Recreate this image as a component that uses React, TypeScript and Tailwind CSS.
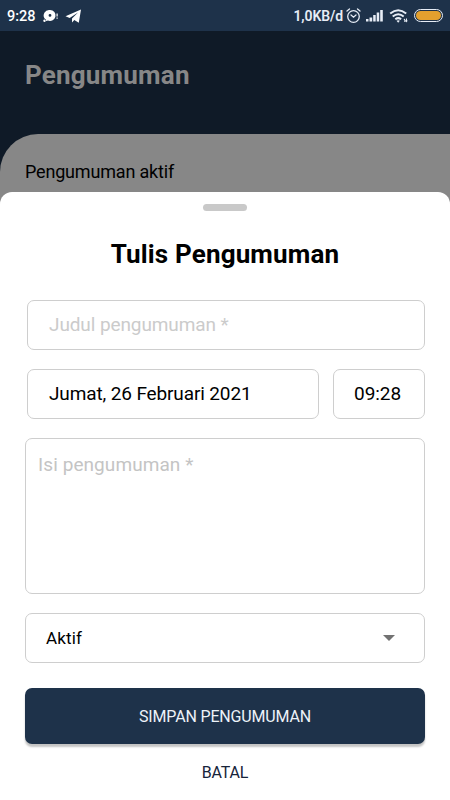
import React from "react";

function StatusBar() {
  return (
    <header className="flex h-[31px] items-center bg-[#1e324a] text-white">
      <span className="ml-[7px] mt-[3px] w-[35px] text-[14.500px] font-medium leading-4 whitespace-nowrap">9:28</span>
      <svg className="mt-[3px]" width="18" height="16" viewBox="0 0 18 16" fill="#fff">
        <path fillRule="evenodd" d="M8 1a5.500 5.500 0 1 1-2.600 10.300L3 10A5.500 5.500 0 0 1 8 1Zm0 4a1.400 1.400 0 1 0 0 2.800A1.400 1.400 0 0 0 8 5Z" />
        <path d="M4 9.500 6 11.500 4 12Z" />
        <circle cx="2.500" cy="11.700" r="1.200" />
        <path d="M14.500 4.500h1.200v3h-1.200zM14.500 8.500h1.200v1.200h-1.200z" />
      </svg>
      <svg className="ml-[5px]" width="17" height="16" viewBox="0 0 17 16" fill="#fff">
        <path d="M16 1.500.5 8.200l4.200 1.700L13 4.500 7 10.500V14.500l2.300-2.400 4.500 2.600Z" />
      </svg>
      <span className="ml-auto mt-px text-[14px] font-semibold leading-4 tracking-[-0.1px] whitespace-nowrap text-[#e7edf6]">1,0KB/d</span>
      <svg className="ml-[3px]" width="15" height="16" viewBox="0 0 15 16" fill="none" stroke="#e7edf6" strokeWidth="1.300" strokeLinecap="round">
        <circle cx="7.500" cy="8.500" r="5.800" />
        <path d="m1 3 2.500-2M14 3l-2.500-2M5 7l2.500 2.200L10 7" />
      </svg>
      <svg className="ml-[4px]" width="19" height="15" viewBox="0 0 19 15" fill="#e7edf6">
        <path d="M1 11h2.500v2.500H1zM4.500 9.500h2.700v4H4.500zM8.200 7h2.500v6.500H8.200zM11.700 4.500h2.500v9h-2.500zM15.200 2h2.600v11.500h-2.600z" />
      </svg>
      <svg className="ml-[5px]" width="20" height="16" viewBox="0 0 20 16">
        <path d="M1.200 5.500q8-6.500 16 0M3.700 8.500q5.500-4.500 11 0M6.300 11.300q2.900-2.300 5.800 0" fill="none" stroke="#e7edf6" strokeWidth="2" />
        <path d="m7.500 12.700 1.700 2 1.700-2q-1.700-1-3.400 0ZM14.500 12l1-1.500 1 1.500v2h-1.200v-2zM17 10.500h1v2h.8l-1.300 2-1.200-2h.7z" fill="#e7edf6" />
      </svg>
      <span className="ml-[5px] mr-[7px] flex h-[13px] w-[29px] rounded-full border-[1.500px] border-[#e7edf6] p-[1px]">
        <span className="flex-1 rounded-full bg-[#e3a02e]" />
      </span>
    </header>
  );
}

function Field({ className, children }: { className: string; children: React.ReactNode }) {
  return <div className={`rounded-[7px] border border-[#cecece] ${className}`}>{children}</div>;
}

export default function App() {
  return (
    <div className="relative h-[800px] w-[450px] overflow-hidden bg-[#0f1a27] font-['Roboto','Liberation_Sans',sans-serif] text-black">
      <StatusBar />
      <h1 className="h-[103px] pl-[25px] pt-[28px] text-[26px] font-bold leading-8 tracking-[0.2px] text-[#878787]">Pengumuman</h1>
      <section className="h-[666px] rounded-tl-[38px] bg-[#878787] pl-[25px] pt-[27px] text-[18px] leading-[22px] tracking-[-0.18px]">
        Pengumuman aktif
      </section>
      <section className="absolute inset-x-0 bottom-0 flex h-[608px] flex-col rounded-t-[12px] bg-white px-[25px] pt-[12px]">
        <div className="h-[7px] w-[44px] shrink-0 self-center rounded-full bg-[#c9c9c9]" />
        <h2 className="mt-[27px] text-center text-[26px] font-bold leading-[32px] tracking-[0.15px]">Tulis Pengumuman</h2>
        <Field className="ml-[2px] mt-[30px] flex h-[50px] shrink-0 items-center pl-[21px] text-[19px] tracking-[-0.1px] text-[#cbcbcb]">Judul pengumuman *</Field>
        <div className="ml-[2px] mt-[19px] flex shrink-0 gap-[14px] text-[19px]">
          <Field className="flex h-[50px] flex-1 items-center pl-[21px] tracking-[-0.13px]">Jumat, 26 Februari 2021</Field>
          <Field className="flex h-[50px] w-[92px] items-center pl-[20px] tracking-[-0.05px]">09:28</Field>
        </div>
        <Field className="mt-[19px] h-[156px] shrink-0 pl-[12px] pt-[15px] text-[19px] leading-[22px] tracking-[0.08px] text-[#c4c4c4]">Isi pengumuman *</Field>
        <Field className="mt-[19px] flex h-[50px] shrink-0 items-center justify-between pl-[20px] pr-[29px] text-[17px]">
          <span className="pt-px tracking-[0.15px]">Aktif</span>
          <svg width="12" height="6" viewBox="0 0 12 6" fill="#727272"><path d="M0 0h12L6 6Z" /></svg>
        </Field>
        <button className="mt-[25px] h-[56px] shrink-0 rounded-[7px] bg-[#1e324a] pt-px text-[16px] tracking-[-0.17px] text-[#edf2f9] shadow-[0_3px_2px_rgba(0,0,0,0.230)]">SIMPAN PENGUMUMAN</button>
        <button className="mt-[18px] text-center text-[16px] leading-[22px] tracking-[-0.15px] text-[#17243a]">BATAL</button>
      </section>
    </div>
  );
}
